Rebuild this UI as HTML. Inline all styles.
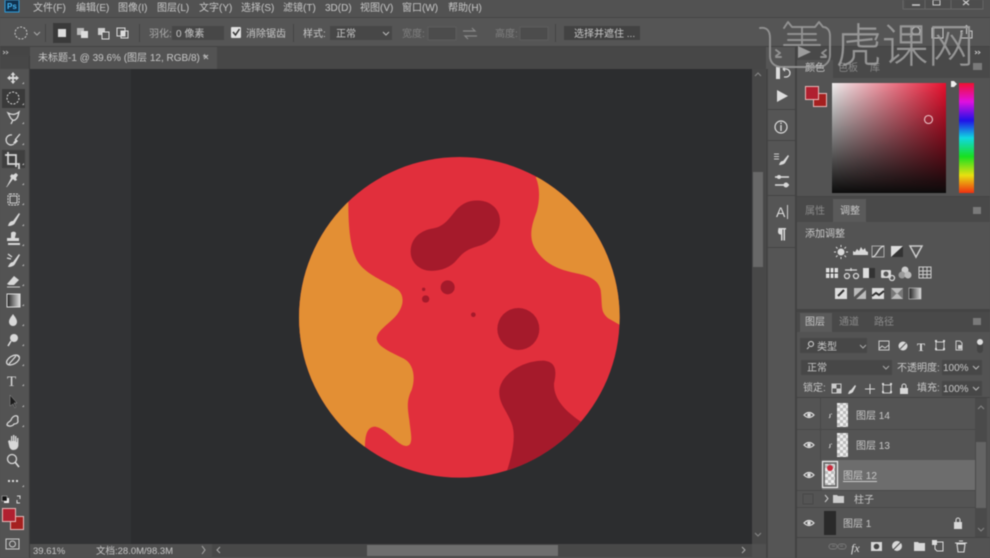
<!DOCTYPE html>
<html><head><meta charset="utf-8"><style>
html,body{margin:0;padding:0;background:#535353;width:990px;height:558px;overflow:hidden}
svg{display:block;filter:blur(.4px)}
text{font-family:"Liberation Sans","Noto Sans CJK SC",sans-serif;font-size:10px;fill:#c8c8c8}
.d{fill:#8a8a8a}
.w{fill:#dcdcdc}
.i{fill:none;stroke:#d8d8d8;stroke-width:1.3}
.f{fill:#d8d8d8}
</style></head><body>
<svg width="990" height="558" viewBox="0 0 990 558" xmlns="http://www.w3.org/2000/svg">
<defs>
<linearGradient id="gx"><stop offset="0" stop-color="#eee"/><stop offset="1" stop-color="#e8102e"/></linearGradient>
<linearGradient id="gy" x2="0" y2="1"><stop offset="0" stop-color="#000" stop-opacity="0"/><stop offset="1" stop-color="#0b0b0b"/></linearGradient>
<linearGradient id="hue" x2="0" y2="1"><stop offset="0" stop-color="#f01030"/><stop offset=".17" stop-color="#e010e0"/><stop offset=".34" stop-color="#2010e8"/><stop offset=".5" stop-color="#10d8e0"/><stop offset=".67" stop-color="#18e020"/><stop offset=".84" stop-color="#e8e010"/><stop offset="1" stop-color="#f03010"/></linearGradient>
<linearGradient id="bw"><stop offset="0" stop-color="#222"/><stop offset="1" stop-color="#ddd"/></linearGradient>
<pattern id="ck" width="6" height="6" patternUnits="userSpaceOnUse"><rect width="6" height="6" fill="#eee"/><rect width="3" height="3" fill="#bbb"/><rect x="3" y="3" width="3" height="3" fill="#bbb"/></pattern>
<clipPath id="pl"><circle cx="508" cy="502" r="481"/></clipPath>
</defs>

<!-- base -->
<rect width="990" height="558" fill="#535353"/>
<rect y="0" width="990" height="17" fill="#525252"/>
<rect y="17" width="990" height="1" fill="#454545"/>
<rect y="18" width="990" height="28" fill="#555"/>
<rect y="46" width="990" height="1" fill="#434343"/>
<rect y="47" width="797" height="22" fill="#474747"/>
<rect x="0" y="47" width="30" height="9" fill="#454545"/>

<!-- canvas -->
<rect x="30" y="69" width="736" height="475" fill="#2c2d2f"/>
<rect x="30" y="69" width="101" height="475" fill="#323335"/>
<rect x="29" y="56" width="1" height="502" fill="#3c3c3c"/>

<!-- planet -->
<g transform="translate(290,150) scale(.33333)">
<circle cx="508" cy="502" r="481" fill="#e12f3c"/>
<g clip-path="url(#pl)">
<path fill="#e38f34" d="M175,155 C175,230 180,290 200,330 C225,375 290,395 325,420 C345,440 340,470 320,495 C300,520 262,540 260,565 C262,590 300,605 340,625 C370,640 378,680 365,720 C350,750 352,770 358,810 C362,850 372,885 350,888 C325,890 290,835 255,830 C230,830 225,860 225,890 L0,900 L0,100 Z"/>
<path fill="#e38f34" d="M737,82 C750,110 750,150 740,185 C725,225 715,260 735,295 C765,345 810,360 860,370 C900,378 925,390 932,420 C938,470 930,485 955,505 L990,525 L1020,400 L900,0 Z"/>
<path fill="#a51a2b" d="M650,965 C665,920 680,860 665,820 C650,780 625,760 628,720 C635,670 700,632 760,632 C800,635 800,665 792,700 C790,750 830,785 868,812 L1000,900 L650,1005 Z"/>
</g>
<path fill="#a51a2b" d="M362,305 C362,262 395,240 430,235 C462,230 478,205 497,182 C520,155 545,150 570,152 C605,155 630,180 630,212 C630,250 600,280 560,290 C530,298 515,312 500,330 C480,355 445,365 415,362 C385,358 362,335 362,305 Z"/>
<circle cx="685" cy="537" r="63" fill="#a51a2b"/>
<circle cx="473" cy="412" r="21" fill="#a51a2b"/>
<circle cx="407" cy="447" r="11" fill="#a51a2b"/>
<circle cx="401" cy="418" r="5" fill="#a51a2b"/>
<circle cx="550" cy="494" r="7" fill="#a51a2b"/>
</g>

<!-- canvas scrollbars -->
<rect x="752" y="69" width="14" height="475" fill="#484848"/>
<rect x="753" y="172" width="10" height="95" fill="#686868"/>
<path d="M755,76l3,-3 3,3M755,533l3,3 3,-3" fill="none" stroke="#888"/>
<rect x="30" y="544" width="736" height="14" fill="#505050"/>
<rect x="212" y="544" width="540" height="13" fill="#484848"/>
<rect x="367" y="545" width="191" height="11" fill="#6e6e6e"/>
<text x="33" y="554" style="font-size:9.5px">39.61%</text>
<text x="96" y="554" style="font-size:9.5px">文档:28.0M/98.3M</text>
<path d="M202,546l3,4 -3,4M220,547l-3,3 3,3M742,547l3,3 -3,3" fill="none" stroke="#aaa"/>

<!-- title bar / menu -->
<rect x="5" y="0" width="14" height="12" fill="#10324f" stroke="#2f9bd8" stroke-width="1"/>
<text x="7" y="9" style="font-size:8px;fill:#45b3ee;font-weight:bold">Ps</text>
<text x="33" y="11">文件(F)</text>
<text x="76" y="11">编辑(E)</text>
<text x="118" y="11">图像(I)</text>
<text x="157" y="11">图层(L)</text>
<text x="199" y="11">文字(Y)</text>
<text x="241" y="11">选择(S)</text>
<text x="283" y="11">滤镜(T)</text>
<text x="325" y="11">3D(D)</text>
<text x="360" y="11">视图(V)</text>
<text x="402" y="11">窗口(W)</text>
<text x="448" y="11">帮助(H)</text>
<rect x="905" y="0" width="79" height="8" fill="#4d4d4d"/>
<path d="M903,0v9h80v-9M925,0v9M951,0v9" fill="none" stroke="#666"/>
<path d="M912,5h8" stroke="#ccc" stroke-width="1.500"/>
<rect x="933" y="0" width="7" height="5" fill="none" stroke="#ccc"/>
<path d="M963,0l6,5M969,0l-6,5" stroke="#ccc" stroke-width="1.200"/>

<!-- options bar -->
<circle cx="21" cy="33" r="6" fill="none" stroke="#ccc" stroke-dasharray="2 1.4"/>
<path d="M34,32l3,3 3,-3" fill="none" stroke="#aaa"/>
<rect x="45" y="24" width="1" height="18" fill="#444"/>
<rect x="53" y="23" width="18" height="20" fill="#3a3a3a"/>
<rect x="58" y="29" width="8" height="8" fill="#ddd"/>
<rect x="77" y="28" width="7" height="7" fill="#bbb"/><rect x="81" y="31" width="7" height="7" fill="#ddd"/>
<rect x="98" y="28" width="7" height="7" fill="#ccc"/><rect x="102" y="32" width="7" height="7" fill="#555" stroke="#ddd"/>
<rect x="117" y="28" width="8" height="8" fill="none" stroke="#ddd"/><rect x="121" y="31" width="7" height="7" fill="none" stroke="#ddd"/><rect x="121" y="31" width="4" height="5" fill="#ddd"/>
<rect x="139" y="24" width="1" height="18" fill="#444"/>
<text x="149" y="37" style="fill:#aaa">羽化:</text>
<rect x="172" y="26" width="52" height="14" fill="#474747"/>
<text x="176" y="37">0 像素</text>
<rect x="231" y="27" width="10" height="11" fill="#e0e0e0" rx="1"/>
<path d="M233,32l2.500,3 4,-6" fill="none" stroke="#333" stroke-width="1.500"/>
<text x="246" y="37">消除锯齿</text>
<rect x="293" y="24" width="1" height="18" fill="#444"/>
<text x="303" y="37">样式:</text>
<rect x="330" y="26" width="62" height="14" fill="#474747"/>
<text x="336" y="37">正常</text>
<path d="M383,32l3,3 3,-3" fill="none" stroke="#bbb"/>
<text x="402" y="37" style="fill:#808080">宽度:</text>
<rect x="428" y="27" width="28" height="13" fill="#4c4c4c" stroke="#5c5c5c"/>
<path d="M463,31h12l-3,-3M477,36h-12l3,3" fill="none" stroke="#888" stroke-width="1.200"/>
<text x="495" y="37" style="fill:#808080">高度:</text>
<rect x="520" y="27" width="28" height="13" fill="#4c4c4c" stroke="#5c5c5c"/>
<rect x="555" y="24" width="1" height="18" fill="#444"/>
<rect x="564" y="26" width="76" height="14" fill="#424242"/>
<text x="574" y="37">选择并遮住 ...</text>

<!-- tab -->
<path d="M3,51l2,1.500 -2,1.500M6,51l2,1.500 -2,1.500" fill="none" stroke="#bbb" stroke-width=".8"/>
<rect x="30" y="47" width="187" height="22" fill="#535353"/>
<text x="38" y="61">未标题-1 @ 39.6% (图层 12, RGB/8) *</text>
<path d="M204,55l4,4M208,55l-4,4" stroke="#bbb"/>

<!-- toolbar -->
<rect x="2" y="89" width="23" height="19" fill="#3a3a3a"/>
<rect x="2" y="150" width="23" height="18" fill="#3f3f3f"/>
<path class="f" d="M13,72l2.500,3h-1.600v2h2v-1.600l3,2.600 -3,2.600v-1.600h-2v2h1.600l-2.500,3 -2.500,-3h1.600v-2h-2v1.600l-3,-2.600 3,-2.600v1.600h2v-2h-1.600z"/>
<circle cx="13" cy="98" r="6" fill="none" stroke="#ddd" stroke-dasharray="2 1.4"/>
<path class="i" d="M8,113c4,2 7,2 11,-1 -1,4 -1,6 -4,8 -2,1 -4,-1 -5,-3zM13,120l-2,4"/>
<path class="i" d="M12,135a5,5 0 1 0 2,9M15,140l5,-6"/><path class="f" d="M13,143l3,-4 2,2 -3,3z"/>
<path class="i" style="stroke-width:1.700" d="M8,152v12h11v5M5,155h11v12"/>
<path class="f" d="M7,186l-1,1 1,0 6,-8 2,2 2,-1 -1,-2 2,-3 -2,-2 -3,2 -1,-1 -2,2 1,2z"/>
<rect x="8" y="194" width="11" height="11" rx="2" fill="none" stroke="#ddd" stroke-dasharray="2 1"/><rect x="10" y="196" width="7" height="7" fill="none" stroke="#ccc"/>
<path class="f" d="M8,226c1,-4 3,-5 5,-5l6,-8 1,1 -5,9c-1,2 -4,3 -7,3z"/>
<path class="f" d="M11,233a3,3 0 0 1 5,0c0,2 -1,3 -1,5h4v3h-12v-3h4c0,-2 0,-3 0,-5zM8,243h12v2h-12z"/>
<path class="f" d="M8,267c1,-3 3,-5 5,-5l6,-8 1,1 -5,9c-1,2 -4,3 -7,3z"/><path class="i" d="M8,254l4,3M7,258l4,1"/>
<path class="f" d="M7,284l7,-8 5,4 -5,5h-5z"/><path d="M7,287h13" stroke="#ccc"/>
<rect x="7" y="294" width="13" height="13" fill="url(#bw)" stroke="#ddd"/>
<path class="f" d="M13,314c2,3 4,5 4,8a4,4 0 0 1 -8,0c0,-3 2,-5 4,-8z"/>
<circle cx="14" cy="338" r="4" class="f"/><path d="M11,341l-3,5" stroke="#ddd" stroke-width="1.500"/>
<ellipse cx="13" cy="360" rx="7" ry="4" transform="rotate(-30 13 360)" class="i"/><path class="i" d="M9,364l7,-8M17,355l2,2"/>
<text x="7" y="386" style="font-size:15px;font-family:'Liberation Serif',serif;fill:#ddd">T</text>
<path d="M10,395v11l3,-2 2,4 1,-1 -2,-4h3z" fill="#1c1c1c" stroke="#999" stroke-width=".5"/>
<path class="i" d="M7,425c0,-3 3,-3 4,-5 1,-3 4,-5 6,-4 2,1 0,3 1,5 0,2 -2,3 -4,3 -1,2 -5,3 -7,1z" />
<path class="f" d="M8,441l2,-1 1,2v-6h1.300v5h.7v-6h1.400v6h.6v-5h1.400v6h.6v-4h1.400v7c0,3 -2,5 -5,5 -2,0 -3,-1 -4,-3z"/>
<circle cx="12" cy="459" r="4.500" class="i"/><path d="M15,462l4,5" stroke="#ddd" stroke-width="1.600"/>
<path d="M8,481h2M12,481h2M16,481h2" stroke="#ddd" stroke-width="2"/>
<rect x="4" y="498" width="5" height="5" fill="#eee"/><rect x="2" y="496" width="5" height="5" fill="#111" stroke="#ccc" stroke-width=".5"/>
<path class="i" d="M17,496h3v3M20,503h-3v-3" style="stroke-width:1"/>
<rect x="10.500" y="516.500" width="13" height="13" fill="#a5201f" stroke="#e7b8b8"/>
<rect x="2.500" y="508.500" width="13" height="13" fill="#b02030" stroke="#e7b8b8"/>
<rect x="6" y="539" width="13" height="10" fill="none" stroke="#ccc"/><circle cx="12.500" cy="544" r="3" fill="none" stroke="#ccc"/>
<g fill="#bbb"><path d="M24,84h-2l2,-2zM24,105h-2l2,-2zM24,124h-2l2,-2zM24,145h-2l2,-2zM24,165h-2l2,-2zM24,185h-2l2,-2zM24,205h-2l2,-2zM24,226h-2l2,-2zM24,246h-2l2,-2zM24,266h-2l2,-2zM24,286h-2l2,-2zM24,306h-2l2,-2zM24,326h-2l2,-2zM24,346h-2l2,-2zM24,366h-2l2,-2zM24,386h-2l2,-2zM24,407h-2l2,-2zM24,427h-2l2,-2zM24,487h-2l2,-2z"/></g>

<!-- dock column -->
<rect x="766" y="47" width="30" height="511" fill="#555"/>
<rect x="766" y="69" width="2" height="489" fill="#444"/>
<rect x="795" y="47" width="2" height="511" fill="#424242"/>
<rect x="768" y="109" width="27" height="1" fill="#444"/>
<rect x="768" y="140" width="27" height="1" fill="#444"/>
<rect x="768" y="195" width="27" height="1" fill="#444"/>
<rect x="768" y="247" width="27" height="1" fill="#444"/>
<rect x="776" y="67" width="4" height="12" fill="#ddd"/><path class="i" d="M783,69h3a3.500,3.500 0 0 1 0,8h-2M783,69l2,-2M783,69l2,2"/>
<path d="M777,90l11,6 -11,6z" fill="#ddd"/>
<circle cx="781" cy="127" r="6" fill="none" stroke="#ddd" stroke-width="1.200"/><path d="M781,125v6M781,122.500v1.500" stroke="#ddd" stroke-width="1.300"/>
<path class="f" d="M779,165c1,-3 2,-4 4,-4l5,-6 1,1 -4,7c-1,1 -3,2 -6,2z"/><path d="M774,154h5M774,156.500h5M774,159h5" stroke="#ccc"/>
<path d="M775,177h14M775,185h14" stroke="#ddd" stroke-width="1.500"/><circle cx="779" cy="177" r="2" class="f"/><circle cx="786" cy="185" r="2.500" class="f"/>
<text x="776" y="217" style="font-size:14px;fill:#ddd">A</text><rect x="787" y="205" width="1" height="14" fill="#ccc"/>
<path class="f" d="M778,228h8v1.500h-1v11h-1.500v-11h-1v11h-1.500v-6c-2,0 -3,-1 -3,-3s1,-3.500 0,-3.500z"/>

<!-- color panel -->
<rect x="797" y="47" width="193" height="31" fill="#494949"/>
<rect x="797" y="60" width="36" height="18" fill="#535353"/>
<text x="805" y="71">颜色</text>
<text x="838" y="71" class="d">色板</text>
<text x="870" y="71" class="d">库</text>
<path d="M975,51l2,1.500 -2,1.500M978,51l2,1.500 -2,1.500" fill="none" stroke="#ccc" stroke-width=".9"/>
<rect x="973" y="63" width="9" height="7" fill="#7a7a7a"/>
<rect x="813.500" y="93.500" width="13" height="13" fill="#a5201f" stroke="#e7b8b8"/>
<rect x="805.500" y="86.500" width="13" height="13" fill="#b02030" stroke="#e7b8b8"/>
<rect x="832" y="83" width="114" height="110" fill="url(#gx)"/>
<rect x="832" y="83" width="114" height="110" fill="url(#gy)"/>
<rect x="959" y="83" width="15" height="110" fill="url(#hue)"/>
<circle cx="928.500" cy="119.500" r="4" fill="none" stroke="#eec8cc" stroke-width="1.100"/>
<path d="M951,81h3l3,3 -3,3h-3z" fill="#eee"/>
<rect x="797" y="196" width="193" height="1" fill="#444"/>

<!-- adjustments panel -->
<rect x="797" y="197" width="193" height="25" fill="#494949"/>
<rect x="833" y="199" width="33" height="23" fill="#5a5a5a"/>
<text x="805" y="214" class="d">属性</text>
<text x="840" y="214">调整</text>
<rect x="973" y="207" width="8" height="7" fill="#7a7a7a"/>
<text x="805" y="237">添加调整</text>
<circle cx="841" cy="252" r="3.500" class="f"/><path d="M841,245v2M841,257v2M834,252h2M846,252h2M836,247l1.500,1.500M846,247l-1.500,1.500M836,257l1.500,-1.500M846,257l-1.500,-1.500" stroke="#ddd"/>
<path class="f" d="M853,255v-4l2,1 2,-3 2,2 2,-4 2,3 2,-2 1,3 2,1v3z"/>
<rect x="872" y="246" width="12" height="11" fill="none" stroke="#aaa"/><path d="M872,257c5,0 6,-10 12,-11" class="i"/>
<rect x="891" y="246" width="12" height="11" fill="#ddd"/><path d="M891,257l12,-11v11z" fill="#333"/>
<path d="M910,246h12l-6,11z" fill="none" stroke="#ccc" stroke-width="1.500"/>
<rect x="826" y="268" width="12" height="10" fill="#ddd"/><path d="M826,273h12M830,268v10M834,268v10" stroke="#333"/>
<circle cx="847" cy="276" r="2.500" class="i"/><circle cx="856" cy="276" r="2.500" class="i"/><path class="i" d="M845,270h12M851,268v3"/>
<rect x="863" y="268" width="12" height="10" fill="#ddd"/><rect x="869" y="268" width="6" height="10" fill="#333"/>
<rect x="881" y="270" width="10" height="8" rx="1" class="f"/><circle cx="886" cy="274" r="2.500" fill="#555"/><circle cx="892" cy="278" r="2.500" class="i"/>
<circle cx="905" cy="270" r="3.500" fill="#ccc"/><circle cx="902" cy="275" r="3.500" fill="#999"/><circle cx="908" cy="275" r="3.500" fill="#bbb"/>
<rect x="919" y="267" width="12" height="11" fill="none" stroke="#ccc"/><path d="M919,271h12M919,274.500h12M923,267v11M927,267v11" stroke="#ccc"/>
<rect x="835" y="288" width="12" height="11" fill="#ddd"/><path d="M838,296l6,-6" stroke="#333" stroke-width="2"/>
<rect x="854" y="288" width="12" height="11" fill="#bbb"/><path d="M854,299l12,-11" stroke="#555" stroke-width="3"/>
<rect x="872" y="288" width="12" height="11" fill="#ddd"/><path d="M872,296l4,-3 3,2 5,-4" stroke="#333" stroke-width="2" fill="none"/>
<rect x="891" y="288" width="12" height="11" fill="#bbb"/><path d="M891,288l6,6 6,-6v11l-6,-6 -6,6z" fill="#777"/>
<rect x="909" y="288" width="12" height="11" fill="url(#bw)" stroke="#ccc" stroke-width=".6"/>

<rect x="797" y="309" width="193" height="3" fill="#444"/>

<!-- layers panel -->
<rect x="797" y="312" width="193" height="20" fill="#494949"/>
<rect x="800" y="313" width="32" height="19" fill="#5a5a5a"/>
<text x="805" y="325">图层</text>
<text x="839" y="325" class="d">通道</text>
<text x="874" y="325" class="d">路径</text>
<rect x="973" y="318" width="8" height="7" fill="#7a7a7a"/>
<rect x="800" y="338" width="67" height="15" fill="#474747"/>
<circle cx="811" cy="344" r="2.500" class="i" style="stroke-width:1"/><path d="M809,347l-2,2" stroke="#ccc"/>
<text x="817" y="350">类型</text>
<path d="M860,345l3,3 3,-3" fill="none" stroke="#aaa"/>
<rect x="879" y="341" width="10" height="9" fill="none" stroke="#ccc"/><path d="M879,349l3,-3 3,2 4,-3" stroke="#ccc" fill="none"/>
<circle cx="903" cy="346" r="4.500" class="f"/><path d="M900,349l6,-6" stroke="#555"/>
<text x="917" y="351" style="font-weight:bold;font-size:12px;font-family:'Liberation Serif',serif;fill:#ddd">T</text>
<rect x="936" y="342" width="8" height="8" fill="none" stroke="#ccc"/><path d="M935,341h2M943,341h2M935,349h2M943,349h2" stroke="#ddd" stroke-width="2"/>
<path d="M956,341h4l2,2v7h-6z" fill="none" stroke="#ccc"/><rect x="958" y="345" width="4" height="4" fill="#ccc"/>
<rect x="977" y="341" width="6" height="12" rx="3" fill="#444"/><circle cx="980" cy="342" r="3" fill="#ddd"/>
<rect x="801" y="360" width="91" height="15" fill="#474747"/>
<text x="807" y="371">正常</text>
<path d="M883,366l3,3 3,-3" fill="none" stroke="#aaa"/>
<text x="897" y="371">不透明度:</text>
<rect x="942" y="360" width="40" height="15" fill="#474747"/>
<text x="943" y="371">100%</text>
<path d="M973,366l3,3 3,-3" fill="none" stroke="#bbb"/>
<text x="803" y="391">锁定:</text>
<rect x="832" y="384" width="9" height="9" fill="none" stroke="#ccc"/><rect x="832" y="384" width="4.500" height="4.500" fill="#ccc"/><rect x="836.500" y="388.500" width="4.500" height="4.500" fill="#ccc"/>
<path class="f" d="M848,394c1,-3 2,-4 3,-4l4,-5 1,1 -3,6c-1,1 -3,2 -5,2z"/>
<path class="i" style="stroke-width:1" d="M870,384v10M865,389h10"/>
<rect x="883" y="385" width="8" height="8" fill="none" stroke="#ccc"/><path d="M882,384h2M890,384h2M882,392h2M890,392h2" stroke="#ddd" stroke-width="2"/>
<rect x="900" y="388" width="8" height="6" class="f"/><path d="M902,388v-2a2,2 0 0 1 4,0v2" fill="none" stroke="#ddd"/>
<text x="917" y="391">填充:</text>
<rect x="942" y="381" width="40" height="15" fill="#474747"/>
<text x="943" y="392">100%</text>
<path d="M973,387l3,3 3,-3" fill="none" stroke="#bbb"/>
<rect x="797" y="397" width="193" height="1" fill="#444"/>

<!-- layers -->
<rect x="797" y="398" width="178" height="139" fill="#545454"/>
<rect x="820" y="398" width="1" height="92" fill="#484848"/>
<rect x="797" y="429" width="178" height="1" fill="#484848"/>
<rect x="797" y="460" width="178" height="30" fill="#545454"/>
<rect x="822" y="460" width="153" height="30" fill="#6d6d6d"/>
<rect x="797" y="490" width="178" height="1" fill="#484848"/>
<rect x="797" y="507" width="178" height="1" fill="#484848"/>
<g fill="none" stroke="#e2e2e2" stroke-width="1.200">
<path d="M804,415q5,-5 10,0q-5,5 -10,0z"/><path d="M804,445q5,-5 10,0q-5,5 -10,0z"/><path d="M804,475q5,-5 10,0q-5,5 -10,0z"/><path d="M804,523q5,-5 10,0q-5,5 -10,0z"/>
</g>
<g fill="#e2e2e2"><circle cx="809" cy="415" r="1.800"/><circle cx="809" cy="445" r="1.800"/><circle cx="809" cy="475" r="1.800"/><circle cx="809" cy="523" r="1.800"/></g>
<rect x="803" y="494" width="10" height="10" fill="none" stroke="#484848"/>
<path d="M830,414v3l-1,1M831,414h1M830,444v3l-1,1M831,444h1" stroke="#ccc" fill="none"/>
<rect x="837" y="403" width="11" height="24" fill="url(#ck)"/>
<rect x="837" y="433" width="11" height="24" fill="url(#ck)"/>
<rect x="822.500" y="461.500" width="15" height="26" fill="none" stroke="#eee" stroke-width="1.200"/>
<rect x="825" y="464" width="10" height="21" fill="url(#ck)"/>
<circle cx="830" cy="468" r="3" fill="#c82a3c"/>
<rect x="824" y="511" width="12" height="24" fill="#2a2a2a"/>
<text x="856" y="419">图层 14</text>
<text x="856" y="449">图层 13</text>
<text x="843" y="479">图层 12</text>
<rect x="843" y="481" width="34" height="1" fill="#ccc"/>
<path d="M825,495l3,3.500 -3,3.500" fill="none" stroke="#ccc"/>
<path d="M833,495h4l1,1h6v7h-11z" fill="#ccc"/>
<text x="854" y="503">柱子</text>
<text x="843" y="527">图层 1</text>
<rect x="954" y="522" width="8" height="7" class="f"/><path d="M956,522v-2a2,2 0 0 1 4,0v2" fill="none" stroke="#ddd"/>
<rect x="975" y="398" width="12" height="139" fill="#4a4a4a"/>
<rect x="976" y="442" width="10" height="66" fill="#646464"/>
<path d="M978,409l3,-3 3,3M978,528l3,3 3,-3" fill="none" stroke="#888"/>
<rect x="797" y="537" width="193" height="1" fill="#444"/>

<!-- layers footer -->
<path d="M832,546h3M840,546h3" stroke="#777"/><rect x="829" y="544" width="8" height="5" rx="2.500" fill="none" stroke="#777"/><rect x="838" y="544" width="8" height="5" rx="2.500" fill="none" stroke="#777"/>
<text x="851" y="552" style="font-family:'Liberation Serif',serif;font-style:italic;font-size:12px;fill:#ddd">fx</text>
<rect x="871" y="542" width="11" height="9" class="f"/><circle cx="876.500" cy="546.500" r="2.800" fill="#444"/>
<circle cx="897" cy="546" r="5" class="f"/><path d="M893,550l8,-8" stroke="#444"/>
<path class="f" d="M914,542h4l1,1h6v8h-11z"/>
<path d="M935,542h8v9h-6l-2,-2z" fill="none" stroke="#ddd"/><rect x="932" y="540" width="5" height="5" fill="#ddd"/>
<path class="i" d="M957,544h8l-1,8h-6zM955,543h12M959,541h4" style="stroke-width:1.100"/>

<!-- options right icons -->
<circle cx="916" cy="31" r="4" fill="none" stroke="#ccc"/><path d="M913,34l-3,3" stroke="#ccc"/>
<rect x="932" y="28" width="11" height="10" fill="none" stroke="#ccc"/>
<path d="M963,31h-2v7h11v-7h-2M966.500,34v-8M964,28l2.500,-2.500 2.500,2.500" fill="none" stroke="#ccc"/>

<!-- watermark -->
<g fill="none" stroke="#9c9c9c" stroke-opacity=".85" stroke-width="1.900" stroke-linecap="round" stroke-linejoin="round">
<path d="M760,28 C767,27 770,31 770,38 V56 C770,63 775,67 782,67 H818 C825,67 830,62 830,55 V36 C830,30 827,27 823,27 L819,22 L815,27 H792 L788,22 L784,28"/>
<path d="M788,34H816M788,40H816M802,28V44M784,45H820M776,50l4,3 -4,3M776,57h5M826,50l-4,3 4,3M826,57h-5"/>
</g>
<path d="M798,46l13,6 -13,6z" fill="#9c9c9c"/>
<text x="836" y="62" style="font-size:46px;font-weight:100;fill:#9c9c9c;stroke:#9c9c9c;stroke-width:.9;fill-opacity:.85;stroke-opacity:.85">虎课网</text>
</svg>
</body></html>
